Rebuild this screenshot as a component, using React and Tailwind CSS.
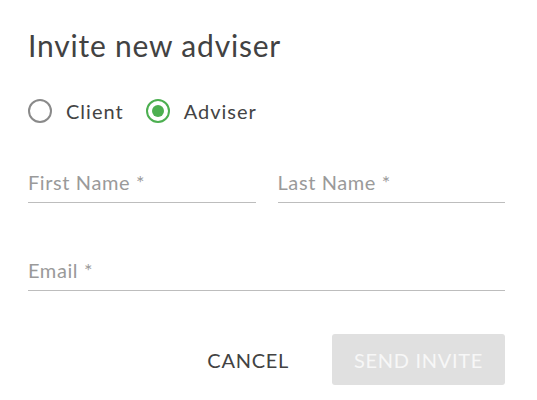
import React, { useState } from "react";

function Radio({ label, checked, onSelect }) {
  return (
    <label onClick={onSelect} className="flex items-center cursor-pointer">
      <span
        className={`w-6 h-6 rounded-full border-[2.5px] flex items-center justify-center ${checked ? "border-[#4caf50]" : "border-[#8a8a8a]"}`}
      >
        {checked && <span className="w-3 h-3 rounded-full bg-[#4caf50]" />}
      </span>
      <span className="ml-[14px] text-[20px] leading-6 tracking-[1px] text-[#444]">{label}</span>
    </label>
  );
}

function Field({ placeholder, className = "" }) {
  return (
    <input
      type="text"
      placeholder={placeholder}
      className={`w-full text-[20px] leading-6 tracking-[0.6px] pt-0 pb-2 border-b border-[#bdbdbd] text-[#333] placeholder:text-[#9a9a9a] outline-none bg-transparent ${className}`}
    />
  );
}

export default function App() {
  const [role, setRole] = useState("adviser");

  return (
    <div
      className="w-[537px] h-[400px] bg-white pl-[28px] pr-[32px] pt-[27px] overflow-hidden"
      style={{ fontFamily: "Lato, 'Open Sans', sans-serif" }}
    >
      <h1 className="text-[30px] leading-9 tracking-[0.8px] text-[#424242] font-normal">Invite new adviser</h1>

      {/* 역할 선택 */}
      <div className="flex items-center gap-[22px] mt-[36px]">
        <Radio label="Client" checked={role === "client"} onSelect={() => setRole("client")} />
        <Radio label="Adviser" checked={role === "adviser"} onSelect={() => setRole("adviser")} />
      </div>

      <div className="flex gap-[22px] mt-[47px]">
        <Field placeholder="First Name *" />
        <Field placeholder="Last Name *" />
      </div>

      <Field placeholder="Email *" className="mt-[55px]" />

      <div className="flex items-center justify-end mt-[43px]">
        <button className="px-4 h-[51px] text-[20px] text-[#424242] tracking-[0.7px]">CANCEL</button>
        <button
          disabled
          className="ml-[27px] h-[51px] px-[22px] rounded-[3px] bg-[#e0e0e0] text-[20px] text-[#f7f7f7] tracking-[0.7px]"
        >
          SEND INVITE
        </button>
      </div>
    </div>
  );
}
